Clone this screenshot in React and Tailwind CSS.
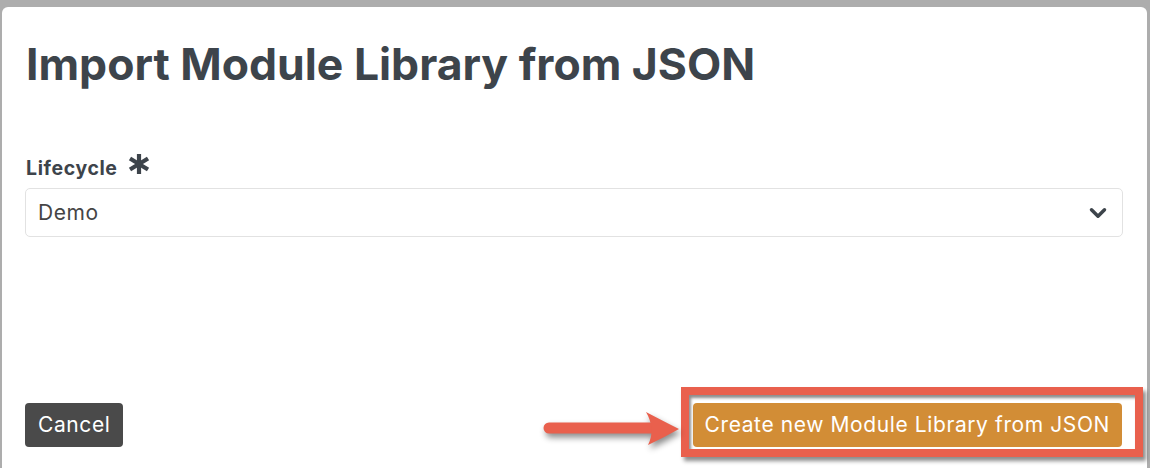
import { ChevronDown } from 'lucide-react';

const font = { fontFamily: 'Inter, "Open Sans", sans-serif' };

function RequiredMark() {
  return (
    <svg width="22" height="20" viewBox="0 0 22 20" className="-mt-[2px]">
      <g stroke="#3d444b" strokeWidth="4.2" strokeLinecap="butt">
        <line x1="11" y1="0" x2="11" y2="20" />
        <line x1="2" y1="4.5" x2="20" y2="15.5" />
        <line x1="2" y1="15.5" x2="20" y2="4.5" />
      </g>
    </svg>
  );
}

function Arrow() {
  return (
    <svg
      width="150"
      height="45"
      viewBox="0 0 150 45"
      className="absolute left-[-154px] top-[5px] drop-shadow-[2px_4px_3px_rgba(0,0,0,0.45)]"
    >
      <line x1="10" y1="20" x2="118" y2="20" stroke="#e9604d" strokeWidth="11" strokeLinecap="round" />
      <path d="M107 4 Q126 14 140 21 Q126 29 109 37 Q117 21 107 4 Z" fill="#e9604d" />
    </svg>
  );
}

export default function App() {
  return (
    <div className="h-[468px] overflow-hidden bg-[#adadad] pt-[7px] pl-[2px] pr-[3px]" style={font}>
      <div className="bg-white rounded-t-[6px] h-[461px] px-6 pt-[30px] pb-[21px] flex flex-col">
        <h1 className="text-[44.5px] leading-[54px] font-bold text-[#3d444b]">
          Import Module Library from JSON
        </h1>

        <div className="mt-[65px] flex items-start gap-[10px]">
          <span className="text-[19.5px] leading-[24px] tracking-[0.6px] font-bold text-[#3d444b]">Lifecycle</span>
          <RequiredMark />
        </div>

        <div className="mt-[8px] -ml-px h-[49px] border border-[#e2e2e2] rounded-[5px] flex items-center justify-between pl-3 pr-[11px]">
          <span className="text-[21px] tracking-[0.6px] text-[#454545]">Demo</span>
          <ChevronDown size={26} strokeWidth={3.2} className="text-[#3d444b]" />
        </div>

        <div className="flex-1" />

        <div className="flex items-end justify-between">
          <button className="-ml-px h-[44px] px-[13px] rounded-[4px] bg-[#4a4a4a] text-white text-[21px] tracking-[0.6px]">
            Cancel
          </button>
          <div className="relative mr-px">
            <button className="h-[44px] px-[12px] rounded-[4px] bg-[#d28d36] text-white text-[21px] tracking-[0.6px]">
              Create new Module Library from JSON
            </button>
            <div className="absolute left-[-12px] top-[-16px] right-[-21px] bottom-[-10px] border-[8px] border-[#e9604d] shadow-[3px_4px_4px_rgba(0,0,0,0.45),inset_2px_3px_3px_rgba(0,0,0,0.45)]" />
            <Arrow />
          </div>
        </div>
      </div>
    </div>
  );
}
